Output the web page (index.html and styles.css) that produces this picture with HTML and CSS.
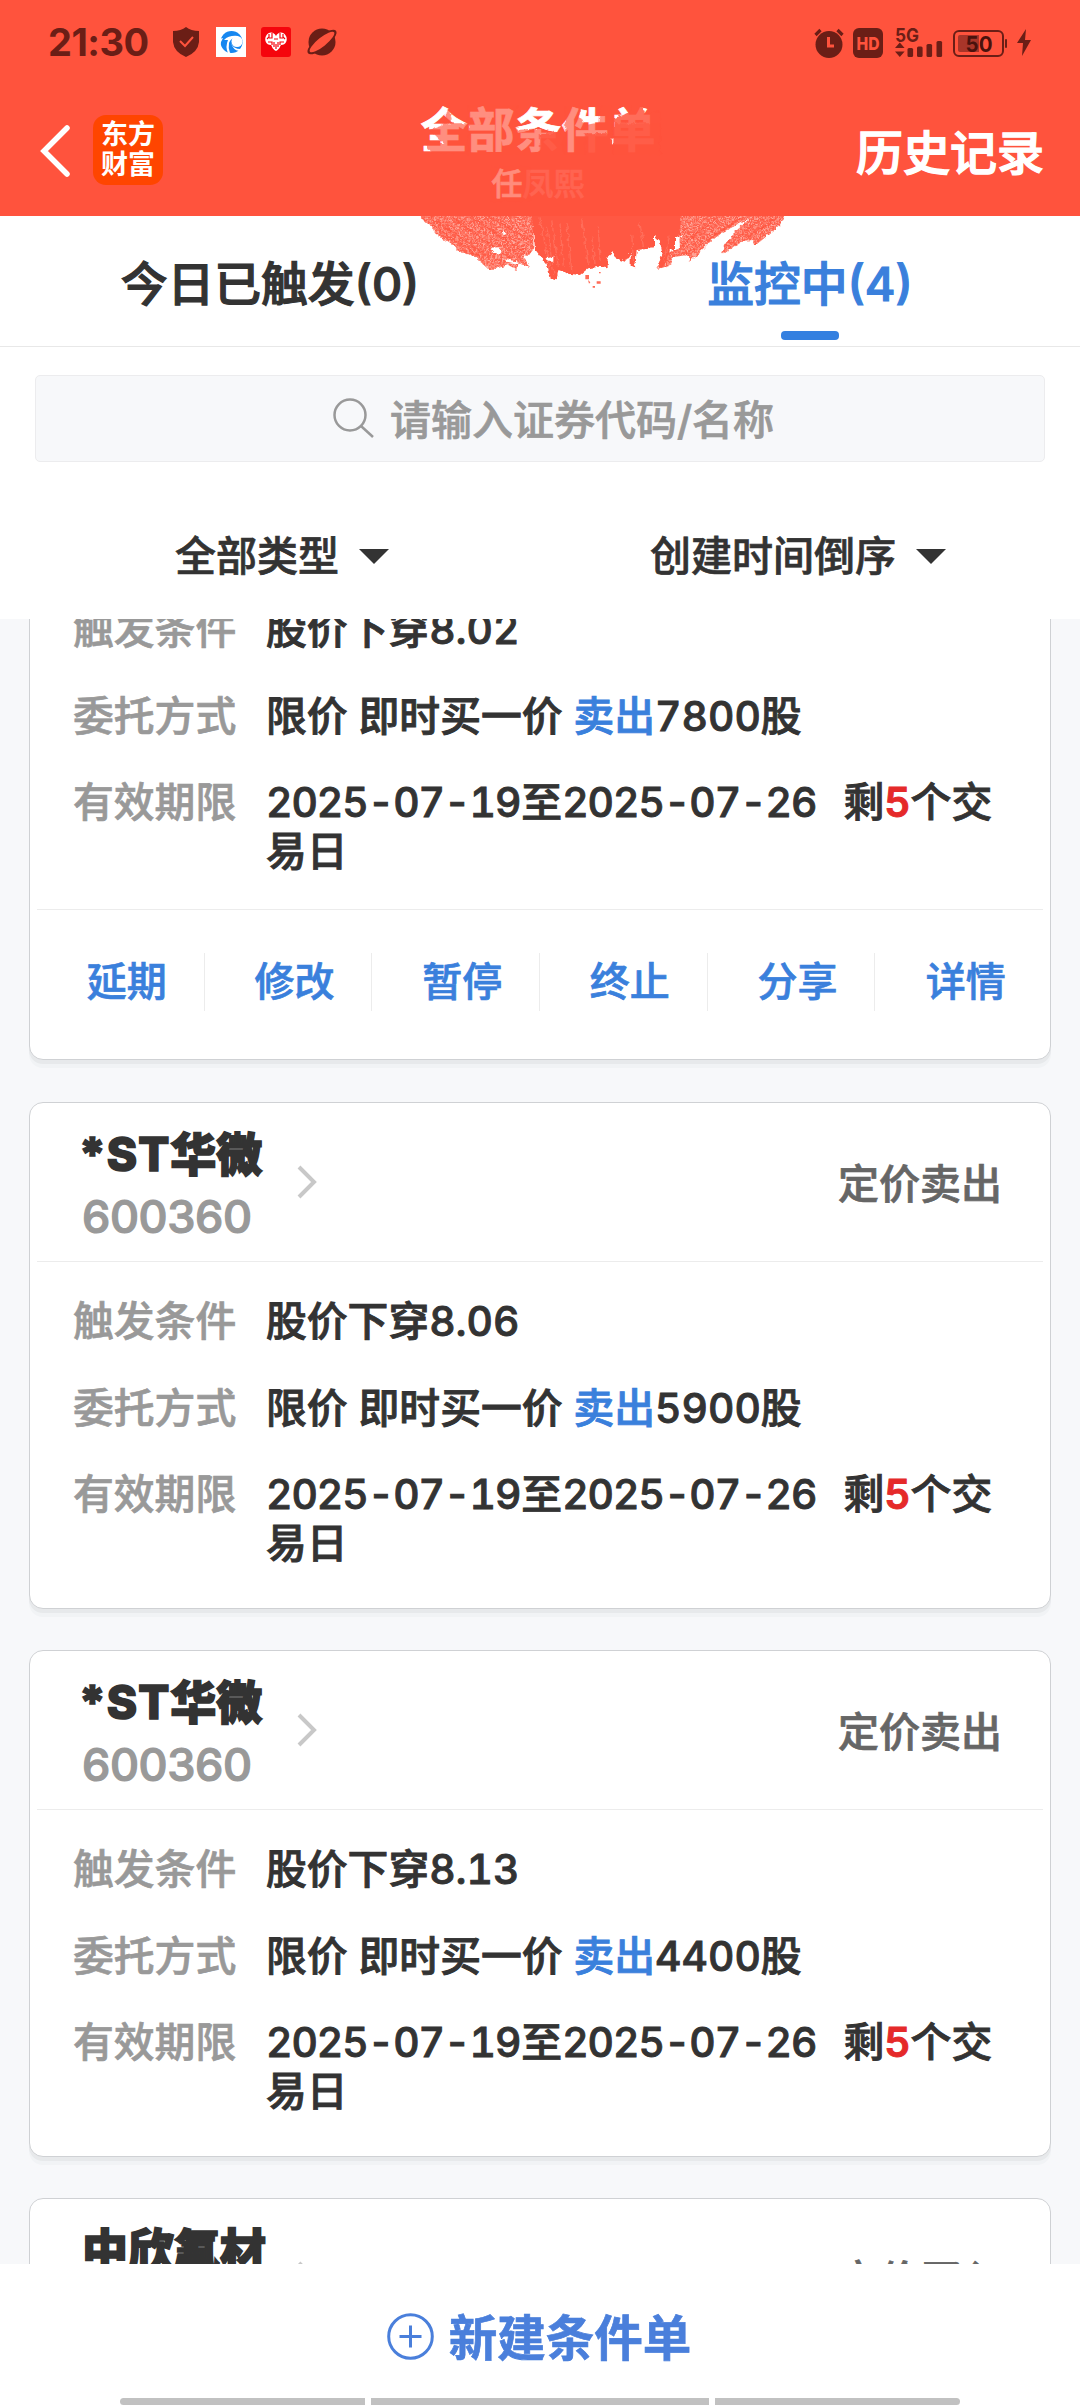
FILE: index.html
```html
<!DOCTYPE html>
<html lang="zh-CN">
<head>
    <meta charset="UTF-8" />
    <meta name="viewport" content="width=device-width, initial-scale=1.0" />
    <title>全部条件单</title>
    <link rel="stylesheet" href="styles.css">
</head>
<body>
    <div class="app">
        <header class="header">
            <div class="status-bar">
                <span class="time">21:30</span>
                <svg class="shield" width="26" height="30" viewBox="0 0 26 30">
                    <path d="M13 0Q18 4 26 4V15Q25 25 13 30Q1 25 0 15V4Q8 4 13 0Z" fill="#6b1e16"/>
                    <path d="M7 14L12 19L20 10" fill="none" stroke="#ff533d" stroke-width="2"/>
                </svg>
                <svg class="browser" width="30" height="30" viewBox="0 0 30 30">
                    <rect width="30" height="30" fill="#fff"/>
                    <circle cx="15.5" cy="15" r="11" fill="#1687f0"/>
                    <circle cx="21" cy="14.5" r="5.5" fill="#fff"/>
                    <path d="M8 13Q13 8 22 9L23 11Q15 10 13 16Q12 21 14 26L12 26Q9 20 12 13ZM15 16Q17 22 25 22L23 24Q17 23 15 16ZM3 12L7 11L5 15L4 20Z" fill="#fff"/>
                </svg>
                <svg class="heart" width="30" height="30" viewBox="0 0 30 30">
                    <rect width="30" height="30" rx="3" fill="#f5050d"/>
                    <path d="M15 24C11 22 11 19 10 18C5 18 3 13 5 9C8 4 13 5 15 9C17 5 22 4 25 9C27 13 25 18 20 18C19 19 19 22 15 24Z" fill="#fff"/>
                    <path d="M8 7V10L6 12M11 6V11H8M7 15H11V18M22 7V10L24 12M19 6V11H22M23 15H19V18M13 12H17M13 15V20M17 15V20M15 17V22" fill="none" stroke="#f5050d" stroke-width="1.2"/>
                </svg>
                <svg class="planet" width="30" height="28" viewBox="0 0 30 28">
                    <circle cx="15" cy="14" r="13.5" fill="#6b1e16"/>
                    <ellipse cx="15" cy="14" rx="18" ry="6.2" transform="rotate(-39 15 14)" fill="#6b1e16"/>
                    <ellipse cx="15" cy="14" rx="15.5" ry="4.4" transform="rotate(-39 15 14)" fill="#ff533d"/>
                </svg>
                <div class="status-right">
                    <svg width="30" height="30" viewBox="0 0 30 30">
                        <circle cx="15" cy="16.5" r="13.5" fill="#6b1e16"/>
                        <path d="M1.5 7L6.5 2M28.5 7L23.5 2" stroke="#6b1e16" stroke-width="3.2"/>
                        <path d="M14.5 9V18H20" fill="none" stroke="#ff533d" stroke-width="3"/>
                    </svg>
                    <svg class="hd" width="30" height="30" viewBox="0 0 30 30">
                        <rect width="30" height="30" rx="6" fill="#6b1e16"/>
                        <text x="15" y="21.5" text-anchor="middle" textLength="23" lengthAdjust="spacingAndGlyphs" class="hd-text">HD</text>
                    </svg>
                    <svg class="signal" width="48" height="31" viewBox="0 0 48 31">
                        <text x="0" y="14.5" textLength="24" lengthAdjust="spacingAndGlyphs" class="net-text">5G</text>
                        <path d="M0 21L4.8 15.5L9.6 21ZM0 24.5L4.8 30L9.6 24.5Z" fill="#6b1e16"/>
                        <rect x="12.5" y="21" width="5.6" height="9" rx="1.5" fill="#6b1e16"/>
                        <rect x="22" y="19.5" width="5.6" height="10.5" rx="1.5" fill="#6b1e16"/>
                        <rect x="31.5" y="17" width="5.6" height="13" rx="1.5" fill="#6b1e16"/>
                        <rect x="41.5" y="14" width="5.6" height="16" rx="1.5" fill="#6b1e16"/>
                    </svg>
                    <svg class="battery" width="54" height="27" viewBox="0 0 54 27">
                        <rect x="1" y="1" width="49" height="25" rx="5" fill="none" stroke="#6b1e16" stroke-width="2"/>
                        <path d="M5 7Q5 5 7 5H26V22H7Q5 22 5 20Z" fill="#a83529"/>
                        <rect x="52" y="9" width="2" height="9" rx="1" fill="#6b1e16"/>
                        <text x="26" y="21.5" text-anchor="middle" textLength="27" lengthAdjust="spacingAndGlyphs" class="battery-text">50</text>
                    </svg>
                    <svg class="bolt" width="14" height="27" viewBox="0 0 14 27">
                        <path d="M9 0L0 14H6L5 27L14 11H8Z" fill="#6b1e16"/>
                    </svg>
                </div>
            </div>
            <div class="nav-bar">
                <svg class="back" width="32" height="54" viewBox="0 0 32 54">
                    <path d="M28 4L5 27L28 50" fill="none" stroke="#fff" stroke-width="5.5" stroke-linecap="round"/>
                </svg>
                <div class="logo">东方<br>财富</div>
                <div class="title">
                    <div class="title-main">全部条件单</div>
                    <div class="title-sub"><span>任</span><span class="faint">凤熙</span></div>
                </div>
                <div class="history">历史记录</div>
            </div>
            <!-- red brush stroke over the title and the tabs -->
            <svg class="brush" width="440" height="230" viewBox="0 0 1320 690">
                <defs>
                    <filter id="grain" x="0" y="0" width="1" height="1" color-interpolation-filters="sRGB">
                        <feTurbulence type="fractalNoise" baseFrequency="0.2" numOctaves="2" seed="4" result="noise"/>
                        <feColorMatrix in="noise" type="matrix" values="0 0 0 0 1  0 0 0 0 .66  0 0 0 0 .61  0 3 0 0 -1.2" result="dots"/>
                        <feComposite in="dots" in2="SourceGraphic" operator="in" result="speck"/>
                        <feMerge><feMergeNode in="SourceGraphic"/><feMergeNode in="speck"/></feMerge>
                    </filter>
                    <filter id="rough" x="-.05" y="-.05" width="1.1" height="1.1" color-interpolation-filters="sRGB">
                        <feTurbulence type="fractalNoise" baseFrequency="0.07" numOctaves="2" seed="8"/>
                        <feDisplacementMap in="SourceGraphic" scale="16" xChannelSelector="R" yChannelSelector="G"/>
                    </filter>
                </defs>
                <g fill="#ff533d" filter="url(#rough)">
                    <path opacity=".66" d="M205 85L215 118L200 130L262 130V220H155L140 205V185L190 190L150 150L185 138ZM265 75H412V225H265ZM412 150L480 145L530 158L550 170V225H412ZM555 75H605L595 110L620 135L655 128L660 75H695V225H555Z"/>
                    <path opacity=".85" d="M480 160H550V225H480ZM615 160H695V225H615ZM700 115L730 105L745 97L760 75H785L800 100L840 95V225H700Z"/>
                    <path opacity=".6" d="M700 130H840V225H700Z"/>
                    <path opacity=".3" d="M335 260H450V365H335Z"/>
                </g>
                <g filter="url(#rough)">
                    <g filter="url(#grain)" fill="#ff604c">
                        <path d="M105 400H460V508L445 528L430 525L447 560L415 550L412 570L385 555L350 566L325 567L300 545L270 520L245 518L210 490L165 460L160 445Z"/>
                        <path d="M895 400H1218L1200 437L1170 460L1125 497L1120 480L1085 482L1030 523L1025 512L1050 470L1110 415L1030 455L985 490L930 545L925 525L880 530L870 555L832 567L845 525L900 505Z"/>
                    </g>
                    <path fill="#ff5843" d="M455 400H900V465L885 475V515L870 505L862 545L840 565L835 552L848 525L840 485L822 468V505L770 510L766 562L752 558V518L735 545L705 535L700 515L683 530V565L655 560L625 565L600 585L570 582L535 570L530 598L512 595L500 552L485 535L465 508Z"/>
                    <g fill="none" stroke="#ff7664" stroke-width="4" opacity=".7">
                        <path d="M480 415L510 570M500 440L522 585M515 420L535 560M540 430L550 560M560 430L575 570M605 415L625 555M635 470L645 550M655 440L660 540M780 430L790 500M755 460L760 540M868 470L850 545"/>
                    </g>
                    <g fill="none" stroke="#ff513b" stroke-width="4" opacity=".7">
                        <path d="M150 412L325 530M215 412L400 540M270 412L430 510M330 412L450 480M155 435L300 530M1080 415L915 525M1190 415L1060 500M1010 415L900 500M1150 415L1080 465"/>
                    </g>
                    <path fill="#fff" d="M332 503L355 502L368 520L350 525ZM365 450L380 458L372 462ZM890 480L910 462L905 472ZM500 535L520 530V545H503ZM375 535L410 545L415 552L380 545Z"/>
                </g>
                <path fill="#ff533d" d="M95 390H1225V408H95Z"/>
                <path fill="#ff6b57" d="M616 585H627V598H616ZM624 600L631 607L627 611ZM650 604H662V611H650ZM638 618H645V623H638ZM657 576H662V580H657Z"/>
            </svg>
        </header>

        <nav class="tabs">
            <div class="tab">今日已触发(0)</div>
            <div class="tab active">监控中(4)</div>
        </nav>

        <div class="search">
            <svg width="41" height="41" viewBox="0 0 41 41">
                <circle cx="17" cy="17" r="15.5" fill="none" stroke="#999" stroke-width="2.5"/>
                <path d="M28 28L40 39" stroke="#999" stroke-width="2.5"/>
            </svg>
            <span>请输入证券代码/名称</span>
        </div>

        <div class="filters">
            <div class="filter"><span>全部类型</span><i class="arrow"></i></div>
            <div class="filter"><span>创建时间倒序</span><i class="arrow"></i></div>
        </div>

        <main class="list">
            <section class="card first">
                <div class="card-body">
                    <div class="row"><span class="label">触发条件</span><span class="value">股价下穿8.02</span></div>
                    <div class="row"><span class="label">委托方式</span><span class="value">限价 即时买一价 <b class="sell">卖出</b>7800股</span></div>
                    <div class="row"><span class="label">有效期限</span><span class="value"><span class="date">2025-07-19</span>至<span class="date end">2025-07-26</span>&nbsp; 剩<b class="days">5</b>个交易日</span></div>
                </div>
                <div class="actions">
                    <a>延期</a><a>修改</a><a>暂停</a><a>终止</a><a>分享</a><a>详情</a>
                </div>
            </section>

            <section class="card">
                <div class="card-head">
                    <div class="stock">
                        <div class="name"><span class="st">*ST</span>华微</div>
                        <div class="code">600360</div>
                    </div>
                    <svg class="chevron" width="20" height="34" viewBox="0 0 20 34"><path d="M2 2L17 17L2 32" fill="none" stroke="#c8c8c8" stroke-width="4"/></svg>
                    <span class="kind">定价卖出</span>
                </div>
                <div class="card-body">
                    <div class="row"><span class="label">触发条件</span><span class="value">股价下穿8.06</span></div>
                    <div class="row"><span class="label">委托方式</span><span class="value">限价 即时买一价 <b class="sell">卖出</b>5900股</span></div>
                    <div class="row"><span class="label">有效期限</span><span class="value"><span class="date">2025-07-19</span>至<span class="date end">2025-07-26</span>&nbsp; 剩<b class="days">5</b>个交易日</span></div>
                </div>
            </section>

            <section class="card">
                <div class="card-head">
                    <div class="stock">
                        <div class="name"><span class="st">*ST</span>华微</div>
                        <div class="code">600360</div>
                    </div>
                    <svg class="chevron" width="20" height="34" viewBox="0 0 20 34"><path d="M2 2L17 17L2 32" fill="none" stroke="#c8c8c8" stroke-width="4"/></svg>
                    <span class="kind">定价卖出</span>
                </div>
                <div class="card-body">
                    <div class="row"><span class="label">触发条件</span><span class="value">股价下穿8.13</span></div>
                    <div class="row"><span class="label">委托方式</span><span class="value">限价 即时买一价 <b class="sell">卖出</b>4400股</span></div>
                    <div class="row"><span class="label">有效期限</span><span class="value"><span class="date">2025-07-19</span>至<span class="date end">2025-07-26</span>&nbsp; 剩<b class="days">5</b>个交易日</span></div>
                </div>
            </section>

            <section class="card">
                <div class="card-head">
                    <div class="stock">
                        <div class="name">中欣氟材</div>
                    </div>
                    <svg class="chevron" width="20" height="34" viewBox="0 0 20 34"><path d="M2 2L17 17L2 32" fill="none" stroke="#c8c8c8" stroke-width="4"/></svg>
                    <span class="kind">定价买入</span>
                </div>
            </section>
        </main>

        <footer class="footer">
            <div class="create">
                <svg width="47" height="47" viewBox="0 0 47 47">
                    <circle cx="23.5" cy="23.5" r="21.8" fill="none" stroke="#4a7fdb" stroke-width="3"/>
                    <path d="M23.5 12.5V34.5M12.5 23.5H34.5" stroke="#4a7fdb" stroke-width="3"/>
                </svg>
                <span>新建条件单</span>
            </div>
            <div class="gesture"><i></i><i class="wide"></i><i></i></div>
        </footer>
    </div>
</body>
</html>
```

FILE: styles.css
```css
* {
    box-sizing: border-box;
}

body {
    margin: 0;
    background: #f7f8fa;
    color: #333;
    font-family: Inter, "Noto Sans CJK SC", sans-serif;
    font-size: 40px;
    font-weight: 500;
    -webkit-text-stroke: 0.7px currentColor;
}

.app {
    width: 1080px;
    height: 2408px;
    display: flex;
    flex-direction: column;
    overflow: hidden;
}

/* Header */
.header {
    position: relative;
    height: 216px;
    flex: none;
    background: #ff533d;
    color: #fff;
}

.status-bar {
    height: 84px;
    padding-left: 48px;
    display: flex;
    align-items: center;
    -webkit-text-stroke: 0;
}

.time {
    width: 125px;
    font-size: 38px;
    font-weight: 700;
    line-height: 84px;
    letter-spacing: -0.5px;
    color: #6b1e16;
}

.browser {
    margin-left: 17px;
}

.heart {
    margin-left: 15px;
}

.planet {
    margin-left: 16px;
    overflow: visible;
}

.status-right {
    margin-left: auto;
    padding-right: 49px;
    padding-top: 1px;
    display: flex;
    align-items: center;
}

.hd {
    margin-left: 9px;
}

.signal {
    margin-left: 12px;
    overflow: visible;
}

.battery {
    margin-left: 10px;
    margin-top: 2px;
}

.bolt {
    margin-left: 10px;
}

.hd-text {
    font-size: 18px;
    font-weight: 800;
    fill: #ff533d;
}

.net-text {
    font-size: 19px;
    font-weight: 700;
    fill: #6b1e16;
}

.battery-text {
    font-size: 22px;
    font-weight: 700;
    fill: #4a120d;
}

.nav-bar {
    height: 132px;
    padding: 0 36px 0 39px;
    display: flex;
    align-items: center;
}

.back {
    margin-top: 2px;
}

.logo {
    width: 70px;
    height: 70px;
    margin-left: 22px;
    padding: 5px 0 0 8px;
    background: #ff4500;
    border-radius: 13px;
    font-size: 27px;
    font-weight: 700;
    line-height: 30px;
    -webkit-text-stroke: 0;
}

.title {
    width: 260px;
    margin-left: 245px;
    padding-top: 8px;
    text-align: center;
}

.title-main {
    font-size: 47px;
    font-weight: 700;
    line-height: 59px;
}

.title-sub {
    font-size: 31px;
    line-height: 49px;
    color: #ffa598;
}

.faint {
    color: #ff6451;
}

.history {
    margin-left: auto;
    font-size: 47px;
    line-height: 60px;
    margin-top: 6px;
    -webkit-text-stroke: 1.3px #fff;
}

.brush {
    position: absolute;
    left: 380px;
    top: 80px;
    z-index: 1;
}

/* Tabs */
.tabs {
    flex: none;
    height: 131px;
    display: flex;
    background: #fff;
    border-bottom: 1px solid #e8e8e8;
}

.tab {
    flex: 1;
    height: 130px;
    display: flex;
    flex-direction: column;
    align-items: center;
    padding-top: 38px;
    font-size: 46.8px;
    line-height: 60px;
    -webkit-text-stroke: 1.2px currentColor;
}

.tab.active {
    color: #3a80dc;
}

.tab.active::after {
    content: "";
    width: 58px;
    height: 9px;
    margin-top: 17px;
    border-radius: 4px;
    background: #3480e0;
}

/* Search and filters */
.search {
    flex: none;
    height: 158px;
    padding: 28px 37px 44px 64px;
    background: #fff;
    display: flex;
    align-items: center;
    justify-content: center;
    gap: 16px;
    font-size: 41px;
    color: #999;
    position: relative;
}

.search::before {
    content: "";
    position: absolute;
    inset: 28px 35px 43px;
    background: #f7f8fa;
    border: 1px solid #ececee;
    border-radius: 5px;
}

.search svg,
.search span {
    position: relative;
}

.search span {
    margin-top: -2px;
}

.filters {
    flex: none;
    height: 114px;
    padding: 0 24px 12px;
    display: flex;
    background: #fff;
}

.filter {
    flex: 1;
    display: flex;
    align-items: center;
    justify-content: center;
    gap: 20px;
    font-size: 41px;
}

.filter span {
    margin-bottom: 7px;
}

.arrow {
    border: 15px solid transparent;
    border-top-color: #333;
    border-bottom: 0;
}

/* Cards */
.list {
    height: 1645px;
    flex: none;
    padding: 0 29px;
    overflow: hidden;
}

.card {
    height: 507px;
    margin-bottom: 41px;
    background: #fff;
    border: 1px solid #cfd1d4;
    border-radius: 14px;
    box-shadow: 0 4px 0 #e7e9eb, 0 8px 0 #f1f3f5;
    padding: 0 7px;
}

.card.first {
    height: 491px;
    margin-top: -50px;
    margin-bottom: 42px;
}

.card-head {
    height: 159px;
    padding: 0 41px 0 45px;
    display: flex;
    align-items: center;
    border-bottom: 1px solid #ececec;
}

.stock {
    width: 184px;
    height: 159px;
    padding-top: 20px;
}

.name {
    font-size: 46px;
    font-weight: 900;
    line-height: 62px;
    white-space: nowrap;
    -webkit-text-stroke: 1.6px #333;
}

.st {
    margin-left: -3px;
    font-weight: 800;
    letter-spacing: 1px;
}

.code {
    font-size: 45px;
    line-height: 64px;
    letter-spacing: -0.4px;
    color: #999;
    -webkit-text-stroke: 1.2px #999;
}

.chevron {
    margin-left: 31px;
}

.kind {
    margin-left: auto;
    margin-top: -3px;
    font-size: 41px;
    color: #666;
}

.card-body {
    padding: 35px 20px 0 36px;
}

.row {
    display: flex;
    margin-bottom: 38px;
    font-size: 40.8px;
    line-height: 48.5px;
}

.label {
    width: 193px;
    flex: none;
    color: #999;
}

.value {
    flex: 1;
    font-variant-numeric: tabular-nums;
    -webkit-text-stroke: 0.9px currentColor;
}

.date {
    margin-right: 1px;
    letter-spacing: -1px;
}

.date.end {
    margin-right: 5px;
}

.value b {
    font-weight: inherit;
}

.sell {
    color: #3a80dc;
}

.value .days {
    color: #e52a2a;
    font-weight: 600;
}

.actions {
    height: 149px;
    padding-top: 43px;
    margin-top: -4px;
    display: flex;
    border-top: 1px solid #ececec;
}

.actions a {
    width: 167.7px;
    height: 58px;
    padding-left: 13px;
    border-right: 1px solid #ececec;
    text-align: center;
    line-height: 58px;
    color: #3a80dc;
}

.actions a:last-child {
    border-right: 0;
}

/* Footer */
.footer {
    height: 144px;
    flex: none;
    background: #fff;
}

.create {
    height: 134px;
    padding-top: 10px;
    padding-right: 2px;
    display: flex;
    align-items: center;
    justify-content: center;
    gap: 15px;
    color: #4a7fdb;
    font-size: 48.5px;
    font-weight: 700;
}

.create span {
    margin-top: -3px;
}

.gesture {
    display: flex;
    justify-content: center;
    gap: 6px;
}

.gesture i {
    width: 245px;
    height: 7px;
    background: #c1c1c1;
}

.gesture i:first-child {
    border-radius: 4px 0 0 4px;
}

.gesture i:last-child {
    border-radius: 0 4px 4px 0;
}

.gesture .wide {
    width: 338px;
}
```
